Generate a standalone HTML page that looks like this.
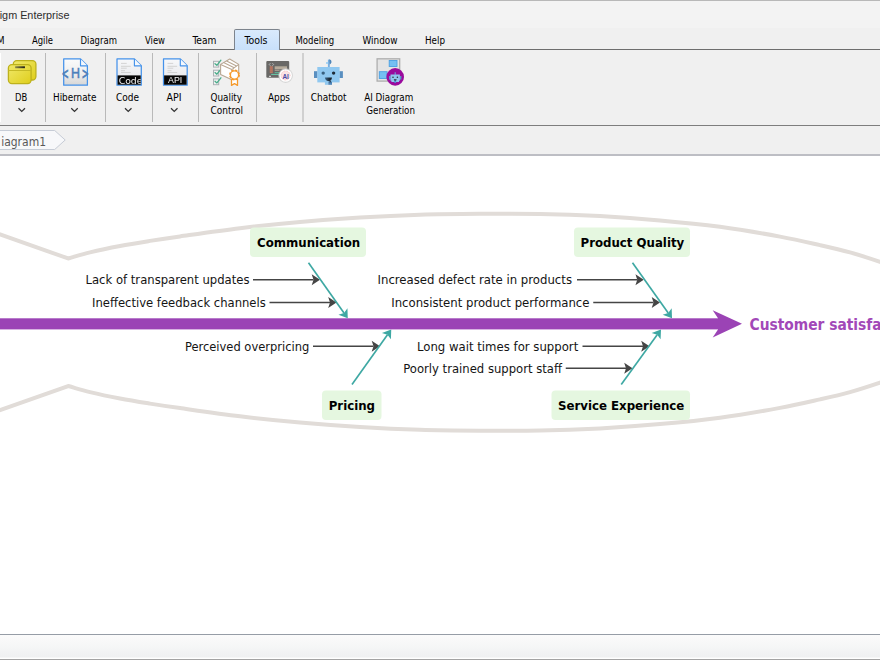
<!DOCTYPE html>
<html lang="en">
<head>
<meta charset="utf-8">
<title>Visual Paradigm Enterprise</title>
<style>
html,body{margin:0;padding:0;}
body{width:880px;height:660px;overflow:hidden;background:#f0f0f0;position:relative;
  font-family:"DejaVu Sans Condensed","DejaVu Sans","Liberation Sans",sans-serif;font-size:11px;color:#000;}
.abs{position:absolute;}
#titlebar{left:0;top:0;width:880px;height:28px;background:#f3f3f3;}
#topline{left:0;top:0;width:880px;height:1px;background:#b8b8b8;}
#title{left:-1px;top:8px;font-size:12px;line-height:14px;color:#000;white-space:nowrap;
  font-family:"Liberation Sans","DejaVu Sans",sans-serif;}
#menubar{left:0;top:28px;width:880px;height:21px;}
#menubar span{position:absolute;top:6px;line-height:13px;white-space:nowrap;}
#menuline{left:0;top:49px;width:880px;height:1px;background:#6d6d6d;}
#tab{left:234px;top:29px;width:46px;height:21px;box-sizing:border-box;border:1px solid #7d848d;border-bottom:none;border-radius:2px 2px 0 0;background:linear-gradient(#d9eafc,#c8e0fa);z-index:2;}
#ribbon{left:0;top:50px;width:880px;height:75px;background:#f0f0f0;}
.sep{position:absolute;top:53px;width:1px;height:69px;background:#b9b9b9;}
.lbl{position:absolute;line-height:13px;white-space:nowrap;text-align:center;transform:translateX(-50%);}
#ribline{left:0;top:125px;width:880px;height:1px;background:#7e7e7e;}
#crumbline{left:0;top:154px;width:880px;height:2px;background:#bdbec4;}
#canvas{left:0;top:156px;width:880px;height:478px;background:#fff;}
#statline{left:0;top:634px;width:880px;height:1px;background:#969da6;}
#status{left:0;top:635px;width:880px;height:24px;background:linear-gradient(#fbfbfb 0,#f5f6f6 50%,#eff0f1 92%,#ffffff 96%,#ffffff 100%);}
#botline{left:0;top:659px;width:880px;height:1px;background:#a3a3a3;}
svg{position:absolute;left:0;top:0;z-index:3;}
svg text{font-family:"DejaVu Sans Condensed","DejaVu Sans","Liberation Sans",sans-serif;}
</style>
</head>
<body>
<div id="titlebar" class="abs"></div>
<div id="topline" class="abs"></div>

<div id="tab" class="abs"></div>
<div id="menuline" class="abs"></div>

<div id="ribbon" class="abs"></div>
<div class="sep" style="left:45px"></div>
<div class="sep" style="left:105px"></div>
<div class="sep" style="left:152px"></div>
<div class="sep" style="left:198px"></div>
<div class="sep" style="left:256px"></div>
<div class="sep" style="left:302px;width:2px;background:#d0d0d0"></div>


<div id="ribline" class="abs"></div>
<div id="crumbline" class="abs"></div>
<div id="canvas" class="abs"></div>
<div id="statline" class="abs"></div>
<div id="status" class="abs"></div>
<div id="botline" class="abs"></div>

<!-- ICONS + BREADCRUMB -->
<svg id="chrome" width="880" height="160" viewBox="0 0 880 160">


  <defs>
    <linearGradient id="gDoc" x1="0" y1="0" x2="0" y2="1"><stop offset="0" stop-color="#fbfbfb"/><stop offset="0.55" stop-color="#eeeeee"/><stop offset="1" stop-color="#d6d6d6"/></linearGradient>
    <linearGradient id="gY" x1="0" y1="0" x2="1" y2="1"><stop offset="0" stop-color="#f0e96a"/><stop offset="1" stop-color="#dfce1c"/></linearGradient>
    <linearGradient id="gSlot" x1="0" y1="0" x2="1" y2="0"><stop offset="0" stop-color="#8f8a48"/><stop offset="1" stop-color="#1c1c14"/></linearGradient>
    <linearGradient id="gY2" x1="0" y1="0" x2="1" y2="0"><stop offset="0" stop-color="#e9e062"/><stop offset="1" stop-color="#d9ca2e"/></linearGradient>
    <linearGradient id="gDoc2" x1="0" y1="0" x2="0" y2="1"><stop offset="0" stop-color="#f7f8fa"/><stop offset="0.650" stop-color="#eaebee"/><stop offset="1" stop-color="#e6e7ea"/></linearGradient>
    <linearGradient id="gTab" x1="0" y1="0" x2="0" y2="1"><stop offset="0" stop-color="#eaf3fc"/><stop offset="1" stop-color="#cfe3f8"/></linearGradient>
  </defs>
  <!-- left white strip -->
  <rect x="0" y="53" width="1" height="69" fill="#ffffff"/>
  <!-- DB icon -->
  <g id="icoDB" stroke="#bdb11c" stroke-width="1.300">
    <rect x="13.300" y="60.600" width="22.600" height="19.400" rx="3.500" fill="url(#gY)"/>
    <rect x="8.400" y="64.600" width="22.700" height="19" rx="3.500" fill="url(#gY)"/>
    <path d="M8.400 70.500 H31.100" fill="none" stroke="#c6ba26" stroke-width="1"/>
    <rect x="15.100" y="66.300" width="9.800" height="1.900" fill="url(#gSlot)" stroke="none"/>
  </g>
  <!-- Hibernate icon -->
  <g id="icoHib">
    <path d="M63.700 58.900 H80.500 L87.400 65.800 V85.200 H63.700 Z" fill="url(#gDoc)" stroke="#4592ea" stroke-width="1.250" stroke-linejoin="round"/>
    <path d="M80.500 58.900 V65.800 H87.400" fill="#f4f8fd" stroke="#4592ea" stroke-width="1.150" stroke-linejoin="round"/>
    <g font-size="14" fill="#4d80bb" stroke="#4d80bb" stroke-width="0.400" style="font-family:'Liberation Sans',sans-serif"><text x="61.700" y="79" font-size="15" stroke-width="0.700" textLength="7" lengthAdjust="spacingAndGlyphs">&lt;</text><text x="75.400" y="78.200" text-anchor="middle">H</text><text x="81.800" y="79" font-size="15" stroke-width="0.700" textLength="7" lengthAdjust="spacingAndGlyphs">&gt;</text></g>
  </g>
  <!-- Code icon -->
  <g id="icoCode">
    <path d="M117 58.900 H134.400 L141.300 65.800 V85.200 H117 Z" fill="url(#gDoc2)" stroke="#4592ea" stroke-width="1.250" stroke-linejoin="round"/>
    <path d="M134.400 58.900 V65.800 H141.300" fill="#f4f8fd" stroke="#4592ea" stroke-width="1.150" stroke-linejoin="round"/>
    <g stroke="#cfcfcf" stroke-width="0.900"><path d="M121 63.400 H126.700 M121 66.300 H130.700 M121 68.200 H126.700 M121 70.700 H125 M121 72.500 H130.700"/></g>
    <rect x="117.600" y="75.400" width="23.100" height="9.300" fill="#050505"/>
    <svg x="117.700" y="75" width="23" height="10" viewBox="117.700 75 23 10" overflow="hidden" style="filter:grayscale(1)"><text x="118.700" y="84" font-size="9.300" fill="#f4f4f4" style="font-family:'DejaVu Sans','Liberation Sans',sans-serif">Code</text></svg>
  </g>
  <!-- API icon -->
  <g id="icoAPI">
    <path d="M163.500 58.900 H180.300 L187.200 65.800 V85.200 H163.500 Z" fill="url(#gDoc2)" stroke="#4592ea" stroke-width="1.250" stroke-linejoin="round"/>
    <path d="M180.300 58.900 V65.800 H187.200" fill="#f4f8fd" stroke="#4592ea" stroke-width="1.150" stroke-linejoin="round"/>
    <g stroke="#cfcfcf" stroke-width="0.900"><path d="M167.500 63.400 H173.200 M167.500 66.300 H177.200 M167.500 68.200 H173.200 M167.500 70.700 H171.500 M167.500 72.500 H177.200"/></g>
    <rect x="164.100" y="75.400" width="22.500" height="9.300" fill="#050505"/>
    <text x="175.200" y="83.400" font-size="8.800" fill="#f2f2f2" text-anchor="middle" style="font-family:'Liberation Sans',sans-serif;filter:grayscale(1)">API</text>
  </g>

  <!-- Quality Control icon -->
  <g id="icoQC" fill="none">
    <g stroke="#aab1b5" stroke-width="1">
      <rect x="213.500" y="61.300" width="5.200" height="5.800"/>
      <rect x="213.500" y="70.200" width="5.200" height="5.800"/>
      <rect x="213.500" y="78.900" width="5.200" height="5.800"/>
    </g>
    <g stroke="#4aae8b" stroke-width="1.300" stroke-linecap="round" stroke-linejoin="round">
      <path d="M215 63.700 L216.900 65.300 L220.900 60.200"/>
      <path d="M215 72.600 L216.900 74.200 L220.900 69.100"/>
      <path d="M215 81.300 L216.900 82.900 L220.900 77.800"/>
    </g>
    <g stroke="#b9a793" stroke-width="1.100" stroke-linejoin="round" fill="#ffffff">
      <path d="M220.600 64.400 L229.700 59 L238.700 64.400 L238.700 75 L231.800 79.700 L220.600 74.600 Z"/>
      <path d="M220.600 64.400 L231.800 69.600 L238.700 64.400 M231.800 69.600 V79.700" fill="none"/>
      <path d="M223.600 62.600 L234.200 67.800 M226.600 60.900 L236.500 66.100" fill="none"/>
    </g>
    <g>
      <path d="M231.500 79 V85.400 L234.500 83.600 L237.500 85.400 V79 Z" fill="#fff" stroke="#f59a2c" stroke-width="1.300" stroke-linejoin="round"/>
      <circle cx="234.500" cy="75" r="4.600" fill="#ffffff" stroke="#f59a2c" stroke-width="1.700" stroke-dasharray="2.300 1.310" />
      <circle cx="234.500" cy="75" r="4.100" fill="#ffffff" stroke="#f59a2c" stroke-width="1.300"/>
    </g>
  </g>
  <!-- Apps icon -->
  <g id="icoApps">
    <rect x="266.300" y="61.100" width="22.900" height="16.600" rx="1" fill="#696866"/>
    <g fill="none">
      <path d="M270.400 63.200 L269.200 64.500 L270.400 65.800 M272.400 63.200 L273.600 64.500 L272.400 65.800" stroke="#c9c9c9" stroke-width="0.800"/>
    </g>
    <rect x="269.800" y="66.200" width="3" height="6.900" fill="#b87a64"/>
    <path d="M269.800 68 H272.800 M269.800 69.700 H272.800 M269.800 71.400 H272.800" stroke="#a66a58" stroke-width="0.500"/>
    <rect x="274.700" y="66.300" width="12.300" height="3" fill="#b6ab9b"/>
    <rect x="274.700" y="69.800" width="4.800" height="1.100" fill="#a99f91"/>
    <rect x="274.700" y="72" width="4.300" height="1.100" fill="#5fae92"/>
    <rect x="271.200" y="73.900" width="9" height="1.100" fill="#68c3a4"/>
    <rect x="269" y="75.800" width="2" height="1.100" fill="#d8d8d8"/>
    <circle cx="285.600" cy="75.600" r="7.300" fill="#cdcdcd" opacity="0.750"/>
    <circle cx="285.600" cy="75.500" r="6.300" fill="#ffffff"/>
    <circle cx="285.600" cy="75.500" r="4.500" fill="#fbe3e3" stroke="#f3b6b6" stroke-width="0.900" stroke-dasharray="0.800 0.800"/>
    <text x="282.500" y="78.500" font-size="8" font-weight="bold" fill="#474aa6" textLength="6.400" lengthAdjust="spacingAndGlyphs" style="font-family:'Liberation Sans',sans-serif">AI</text>
  </g>
  <!-- Chatbot icon -->
  <g id="icoBot">
    <defs><linearGradient id="gMouth" x1="0" y1="0" x2="1" y2="0"><stop offset="0" stop-color="#3f6a8e"/><stop offset="0.600" stop-color="#1d2a36"/><stop offset="1" stop-color="#1a232c"/></linearGradient></defs>
    <rect x="327.900" y="59.600" width="1.900" height="8" fill="#78afe0"/>
    <rect x="326" y="62.200" width="2.200" height="1.600" fill="#96ccf3"/>
    <path d="M329.200 59.200 Q331.800 59.800 331.400 62.200 Q331 64.200 329.600 64.400 Z" fill="#4f86b9"/>
    <rect x="314" y="71.200" width="3.500" height="6.800" fill="#5a8fc0"/>
    <rect x="339.400" y="71.200" width="3.500" height="6.800" fill="#5a8fc0"/>
    <rect x="317.300" y="67" width="22.300" height="15.400" fill="#90c8f0"/>
    <rect x="324.900" y="82" width="3.400" height="2.800" fill="#90c8f0"/>
    <rect x="328.300" y="82" width="3.700" height="2.800" fill="#4f86b9"/>
    <circle cx="323.200" cy="73.100" r="1.700" fill="#39607f"/>
    <circle cx="333.600" cy="73.100" r="1.700" fill="#1f2c38"/>
    <path d="M324.900 77.500 H332 Q331.800 81.200 328.300 81.200 Q325.300 80.800 324.900 77.500 Z" fill="url(#gMouth)"/>
    <path d="M329.300 80.800 H331.200 V82.400 H329.300 Z" fill="#2c4a66"/>
  </g>
  <!-- AI Diagram Generation icon -->
  <g id="icoAIDG">
    <rect x="377.100" y="58.800" width="22.600" height="22.300" fill="#e4e4e4" stroke="#aeaeae" stroke-width="1.300"/>
    <rect x="389.200" y="60.500" width="7.800" height="6" fill="#74bff2" stroke="#4a9fe2" stroke-width="0.900"/>
    <rect x="379.300" y="71.700" width="7.800" height="6.800" fill="#74bff2" stroke="#4a9fe2" stroke-width="0.900"/>
    <circle cx="395.200" cy="76.900" r="8.800" fill="#9a0a9d"/>
    <g transform="translate(0,0.700)"><path d="M395.200 74 V71.500" stroke="#6aa6e0" stroke-width="1.100" fill="none"/>
    <rect x="389" y="75.300" width="1.600" height="3.600" fill="#5e97c9"/>
    <rect x="399.800" y="75.300" width="1.600" height="3.600" fill="#5e97c9"/>
    <path d="M390.500 73.800 H399.900 V80 H399 V81.200 H391.400 V80 H390.500 Z" fill="#8fc5ef"/>
    <circle cx="393" cy="76.500" r="0.800" fill="#2a2f3a"/>
    <circle cx="397.400" cy="76.500" r="0.800" fill="#2a2f3a"/>
    <path d="M393.800 78.500 H396.600 Q396.500 80.200 395.200 80.200 Q393.900 80.200 393.800 78.500 Z" fill="#2a2f3a"/>
    <path d="M394.300 80 H396.100 V82 Q395.200 82.500 394.300 82 Z" fill="#4d8fd2"/>
  </g>
  </g>
  <!-- title -->
  <text x="-0.300" y="18.800" font-size="11.300" fill="#2e2e2e" style="font-family:'Liberation Sans','DejaVu Sans',sans-serif" textLength="69.800" lengthAdjust="spacingAndGlyphs">igm Enterprise</text>
  <!-- menu -->
  <g font-size="11" fill="#000" lengthAdjust="spacingAndGlyphs">
    <text x="-3" y="43.750" textLength="7.500" lengthAdjust="spacingAndGlyphs">M</text>
    <text x="32" y="43.750" textLength="21" lengthAdjust="spacingAndGlyphs">Agile</text>
    <text x="80.500" y="43.750" textLength="36.500" lengthAdjust="spacingAndGlyphs">Diagram</text>
    <text x="145" y="43.750" textLength="20" lengthAdjust="spacingAndGlyphs">View</text>
    <text x="192.500" y="43.750" textLength="24" lengthAdjust="spacingAndGlyphs">Team</text>
    <text x="244.500" y="43.750" textLength="23" lengthAdjust="spacingAndGlyphs">Tools</text>
    <text x="295.500" y="43.750" textLength="38.750" lengthAdjust="spacingAndGlyphs">Modeling</text>
    <text x="362.500" y="43.750" textLength="35" lengthAdjust="spacingAndGlyphs">Window</text>
    <text x="425" y="43.750" textLength="20" lengthAdjust="spacingAndGlyphs">Help</text>
  </g>
  <!-- ribbon labels -->
  <g font-size="11" fill="#000">
    <text x="15" y="100.750" textLength="12.250" lengthAdjust="spacingAndGlyphs">DB</text>
    <text x="53" y="100.750" textLength="43.500" lengthAdjust="spacingAndGlyphs">Hibernate</text>
    <text x="116" y="100.750" textLength="23" lengthAdjust="spacingAndGlyphs">Code</text>
    <text x="166.500" y="100.750" textLength="15" lengthAdjust="spacingAndGlyphs">API</text>
    <text x="210.500" y="100.750" textLength="31.500" lengthAdjust="spacingAndGlyphs">Quality</text>
    <text x="210.500" y="113.750" textLength="32.500" lengthAdjust="spacingAndGlyphs">Control</text>
    <text x="268" y="100.750" textLength="22" lengthAdjust="spacingAndGlyphs">Apps</text>
    <text x="310.750" y="100.750" textLength="35.750" lengthAdjust="spacingAndGlyphs">Chatbot</text>
    <text x="364.250" y="100.750" textLength="49" lengthAdjust="spacingAndGlyphs">AI Diagram</text>
    <text x="366.250" y="113.750" textLength="48.750" lengthAdjust="spacingAndGlyphs">Generation</text>
  </g>
  <!-- chevrons -->
  <g fill="none" stroke="#333" stroke-width="1.3">
    <path d="M18.500 108.300 L21.750 111.400 L25 108.300"/>
    <path d="M71.250 108.300 L74.500 111.400 L77.750 108.300"/>
    <path d="M125 108.300 L128.250 111.400 L131.500 108.300"/>
    <path d="M171 108.300 L174.250 111.400 L177.500 108.300"/>
  </g>
  <!-- breadcrumb -->
  <path d="M-2 130.500 H54.700 L65.200 140 L54.700 149.500 H-2 Z" fill="#f7f8fa" stroke="#c6ccd6" stroke-width="1"/>
  <text x="1.200" y="145.600" font-size="13" fill="#595959" textLength="44.800" lengthAdjust="spacingAndGlyphs">iagram1</text>
</svg>

<!-- DIAGRAM -->
<svg id="diagram" width="880" height="660" viewBox="0 0 880 660">
  <!-- fish outline -->
  <path id="fish" d="M-6.00 232.16 L68.20 258.50 C75.47 256.47 81.37 254.48 90.00 252.40 C98.63 250.32 110.00 247.92 120.00 246.00 C130.00 244.08 140.00 242.50 150.00 240.90 C160.00 239.30 165.00 238.52 180.00 236.40 C195.00 234.28 220.00 230.60 240.00 228.20 C260.00 225.80 280.00 223.78 300.00 222.00 C320.00 220.22 340.00 218.72 360.00 217.50 C380.00 216.28 400.00 215.32 420.00 214.70 C440.00 214.08 460.00 213.93 480.00 213.80 C500.00 213.67 520.00 213.52 540.00 213.90 C560.00 214.28 580.00 215.02 600.00 216.10 C620.00 217.18 640.00 218.62 660.00 220.40 C680.00 222.18 700.00 224.10 720.00 226.80 C740.00 229.50 763.33 233.55 780.00 236.60 C796.67 239.65 808.33 242.47 820.00 245.10 C831.67 247.73 840.00 249.60 850.00 252.40 C860.00 255.20 871.67 259.10 880.00 261.90 C888.33 264.70 893.33 266.77 900.00 269.20 M-6.00 412.34 L68.20 386.00 C75.47 388.03 81.37 390.02 90.00 392.10 C98.63 394.18 110.00 396.58 120.00 398.50 C130.00 400.42 140.00 402.00 150.00 403.60 C160.00 405.20 165.00 405.98 180.00 408.10 C195.00 410.22 220.00 413.90 240.00 416.30 C260.00 418.70 280.00 420.72 300.00 422.50 C320.00 424.28 340.00 425.78 360.00 427.00 C380.00 428.22 400.00 429.18 420.00 429.80 C440.00 430.42 460.00 430.57 480.00 430.70 C500.00 430.83 520.00 430.98 540.00 430.60 C560.00 430.22 580.00 429.48 600.00 428.40 C620.00 427.32 640.00 425.88 660.00 424.10 C680.00 422.32 700.00 420.40 720.00 417.70 C740.00 415.00 763.33 410.95 780.00 407.90 C796.67 404.85 808.33 402.03 820.00 399.40 C831.67 396.77 840.00 394.90 850.00 392.10 C860.00 389.30 871.67 385.40 880.00 382.60 C888.33 379.80 893.33 377.73 900.00 375.30"
        fill="none" stroke="#e1dcd8" stroke-width="4" stroke-linejoin="miter"/>

  <!-- category boxes -->
  <g fill="#e5f7e0">
    <rect x="250" y="227.500" width="116" height="29.500" rx="4"/>
    <rect x="574" y="227.500" width="116" height="29.500" rx="4"/>
    <rect x="322" y="390.500" width="59.500" height="29.500" rx="4"/>
    <rect x="551.500" y="390.500" width="138.500" height="29.500" rx="4"/>
  </g>
  <g font-size="13" font-weight="bold" fill="#000">
    <text x="257" y="247" textLength="103.25" lengthAdjust="spacingAndGlyphs">Communication</text>
    <text x="580.500" y="247" textLength="103.75" lengthAdjust="spacingAndGlyphs">Product Quality</text>
    <text x="328.750" y="410" textLength="46.25" lengthAdjust="spacingAndGlyphs">Pricing</text>
    <text x="558" y="410" textLength="126.25" lengthAdjust="spacingAndGlyphs">Service Experience</text>
  </g>
  <g font-size="13" fill="#141414">
    <text x="85.500" y="284" textLength="164" lengthAdjust="spacingAndGlyphs">Lack of transparent updates</text>
    <text x="92" y="306.500" textLength="173.75" lengthAdjust="spacingAndGlyphs">Ineffective feedback channels</text>
    <text x="185" y="350.750" textLength="124.25" lengthAdjust="spacingAndGlyphs">Perceived overpricing</text>
    <text x="377.500" y="284" textLength="194.5" lengthAdjust="spacingAndGlyphs">Increased defect rate in products</text>
    <text x="391.250" y="306.500" textLength="198.25" lengthAdjust="spacingAndGlyphs">Inconsistent product performance</text>
    <text x="417" y="350.750" textLength="161.25" lengthAdjust="spacingAndGlyphs">Long wait times for support</text>
    <text x="403.250" y="373" textLength="158.75" lengthAdjust="spacingAndGlyphs">Poorly trained support staff</text>
  </g>
<g id="causes">
<path d="M253.00 279.75 L313.50 279.75" stroke="#454545" stroke-width="1.7" fill="none"/><path d="M320.00 279.75 L311.70 285.25 L313.50 279.75 L311.70 274.25 Z" fill="#454545"/>
<path d="M269.50 302.50 L330.00 302.50" stroke="#454545" stroke-width="1.7" fill="none"/><path d="M336.50 302.50 L328.20 308.00 L330.00 302.50 L328.20 297.00 Z" fill="#454545"/>
<path d="M313.00 346.25 L373.50 346.25" stroke="#454545" stroke-width="1.7" fill="none"/><path d="M380.00 346.25 L371.70 351.75 L373.50 346.25 L371.70 340.75 Z" fill="#454545"/>
<path d="M577.00 279.75 L637.25 279.75" stroke="#454545" stroke-width="1.7" fill="none"/><path d="M643.75 279.75 L635.45 285.25 L637.25 279.75 L635.45 274.25 Z" fill="#454545"/>
<path d="M593.25 302.50 L653.50 302.50" stroke="#454545" stroke-width="1.7" fill="none"/><path d="M660.00 302.50 L651.70 308.00 L653.50 302.50 L651.70 297.00 Z" fill="#454545"/>
<path d="M582.50 346.25 L643.00 346.25" stroke="#454545" stroke-width="1.7" fill="none"/><path d="M649.50 346.25 L641.20 351.75 L643.00 346.25 L641.20 340.75 Z" fill="#454545"/>
<path d="M565.75 368.25 L626.00 368.25" stroke="#454545" stroke-width="1.7" fill="none"/><path d="M632.50 368.25 L624.20 373.75 L626.00 368.25 L624.20 362.75 Z" fill="#454545"/>
</g>
<g id="bones">
<path d="M308.50 262.75 L344.00 312.99" stroke="#3ea8a3" stroke-width="1.65" fill="none"/><path d="M347.75 318.30 L338.47 314.70 L344.00 312.99 L347.45 308.35 Z" fill="#3ea8a3"/>
<path d="M632.50 262.75 L668.23 313.00" stroke="#3ea8a3" stroke-width="1.65" fill="none"/><path d="M672.00 318.30 L662.71 314.72 L668.23 313.00 L671.67 308.35 Z" fill="#3ea8a3"/>
<path d="M352.00 384.50 L387.48 334.69" stroke="#3ea8a3" stroke-width="1.65" fill="none"/><path d="M391.25 329.40 L390.91 339.35 L387.48 334.69 L381.95 332.97 Z" fill="#3ea8a3"/>
<path d="M621.25 384.50 L657.20 334.67" stroke="#3ea8a3" stroke-width="1.65" fill="none"/><path d="M661.00 329.40 L660.60 339.35 L657.20 334.67 L651.68 332.91 Z" fill="#3ea8a3"/>
</g>

  <!-- spine -->
  <rect x="0" y="318.300" width="722" height="11.100" fill="#9b43b5"/>
  <path d="M712.700 310.200 L742 323.800 L712.700 337.500 L718 329.400 L718 318.300 Z" fill="#9b43b5"/>
  <text x="749.500" y="329.500" font-size="15.300" font-weight="bold" fill="#a248b8" textLength="171" lengthAdjust="spacingAndGlyphs">Customer satisfaction</text>
</svg>
</body>
</html>
